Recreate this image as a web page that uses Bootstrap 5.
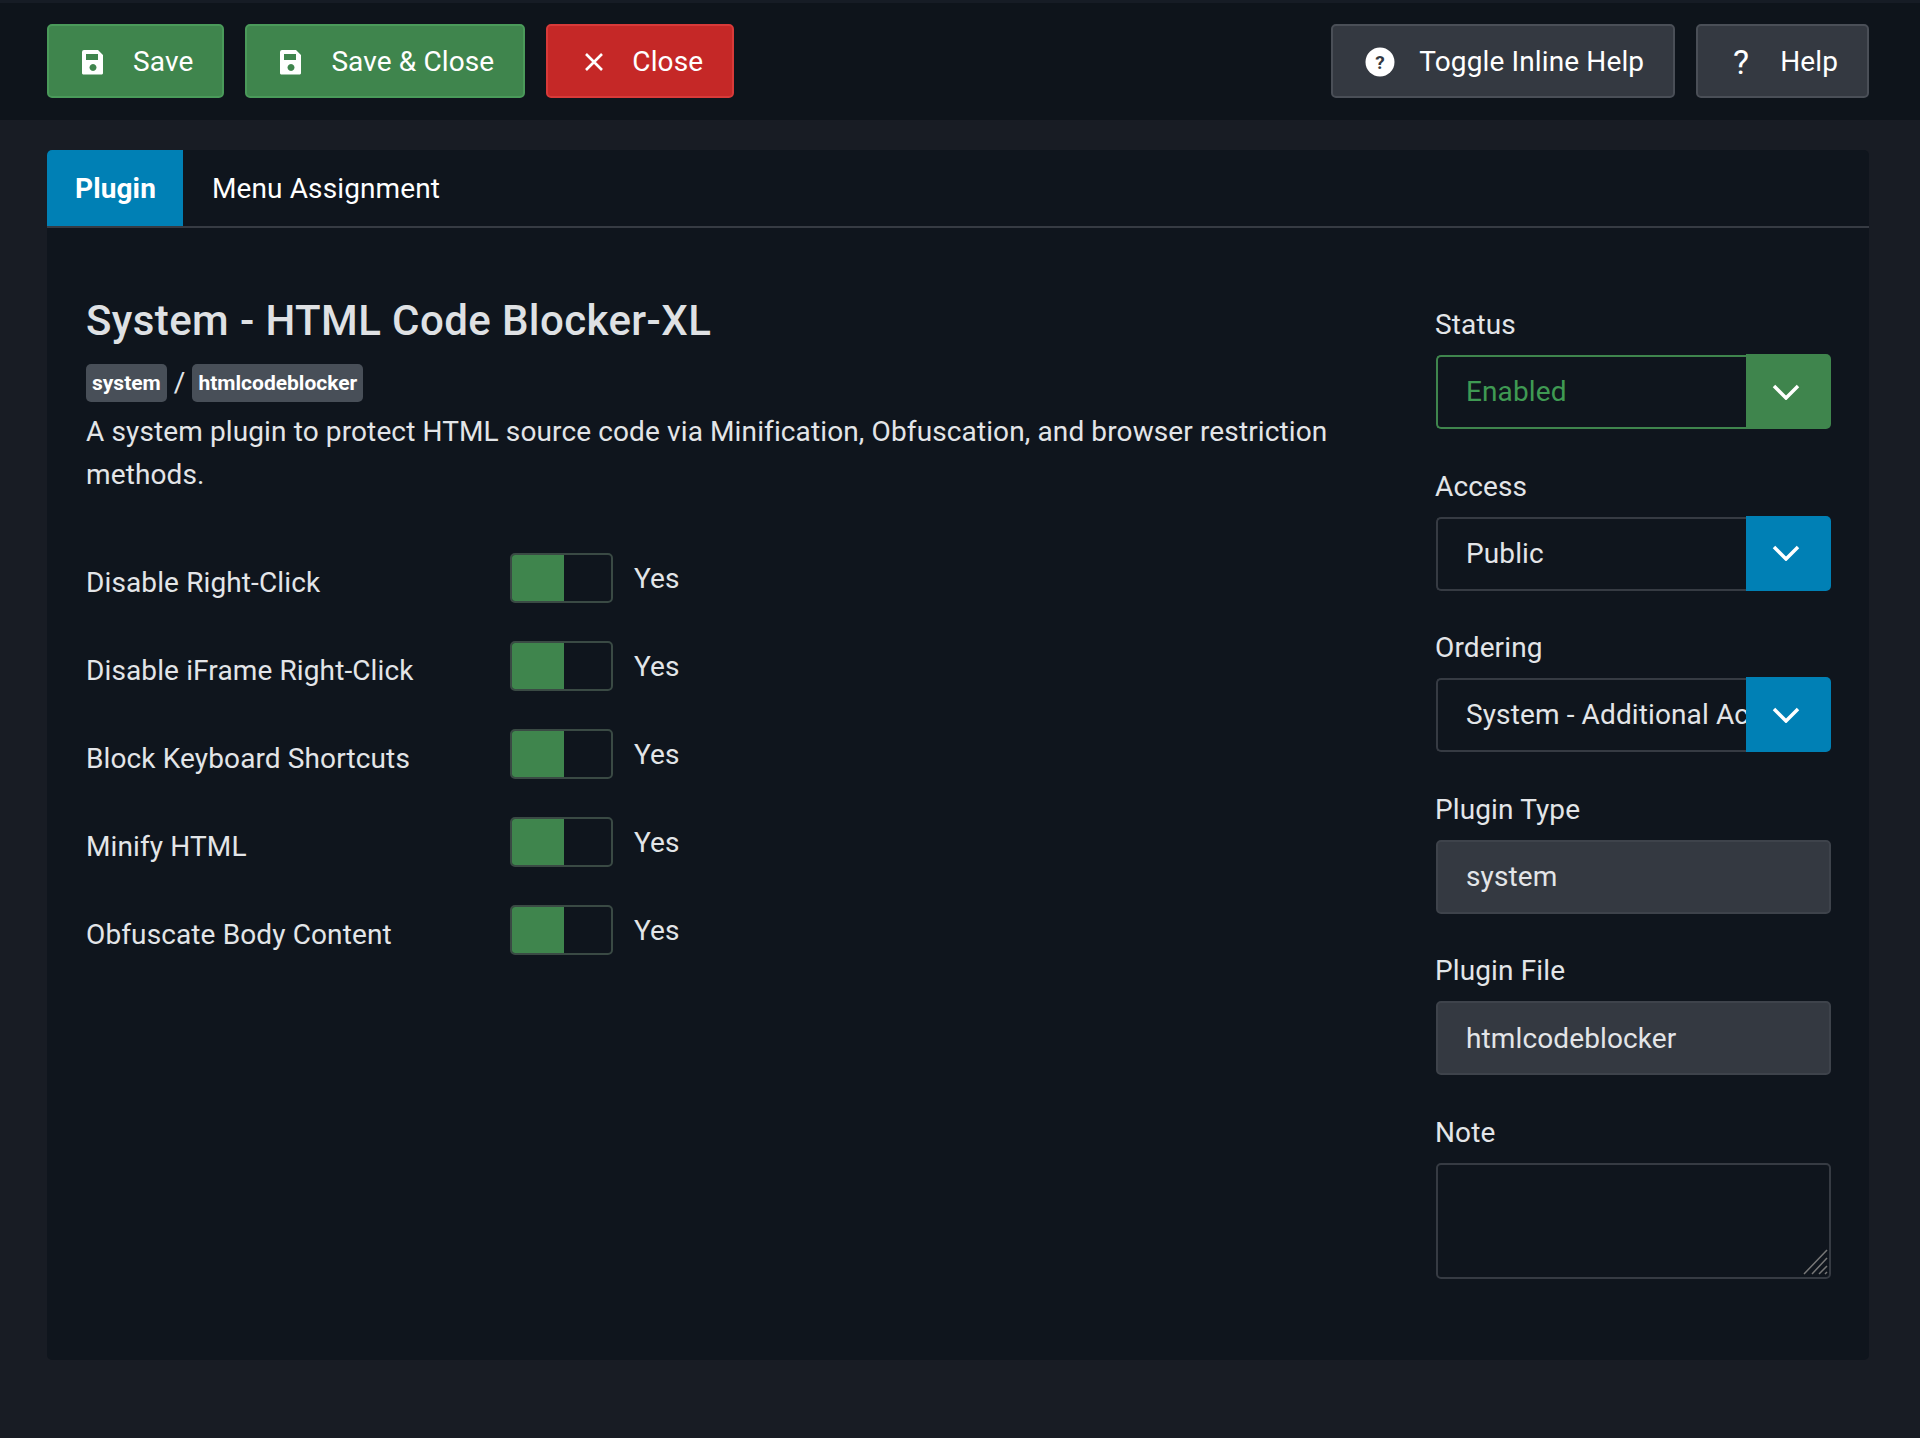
<!DOCTYPE html>
<html lang="en">
<head>
    <meta charset="UTF-8">
    <meta name="viewport" content="width=device-width, initial-scale=1.0">
    <title>Plugins: System - HTML Code Blocker-XL</title>
    <link href="https://cdn.jsdelivr.net/npm/bootstrap@5.3.1/dist/css/bootstrap.min.css" rel="stylesheet">
    <style>
        body { background: #181c24; color: #e3e5e8; font-family: Roboto, "Liberation Sans", sans-serif; font-size: 28px; letter-spacing: .12px; min-height: 1438px; }
        .top-bar { background: #0e141b; border-top: 3px solid #161c25; height: 120px; padding: 21px 51px 0 47px; }
        .act-btn { height: 74px; font-size: 28px; color: #fff; border-radius: 5px; padding: 2px 29px 0 32px; gap: 28px; display: inline-flex; align-items: center; border: 2px solid; }
        .act-btn:hover { color: #fff; }
        .act-green { background: #3f854d; border-color: #4a9a5a; }
        .act-red { background: #c52827; border-color: #d83a39; padding-left: 36px; }
        .act-gray { background: #343941; border-color: #4a4f57; }
        .act-tight { gap: 24px; }
        .sheet { margin: 30px 51px 0 47px; background: #0f151d; border-radius: 5px; height: 1210px; }
        .tab-row { height: 78px; border-bottom: 2px solid #363b43; }
        .tab-item { padding: 2px 29px 0; font-size: 28px; color: #fff; height: 76px; display: flex; align-items: center; text-decoration: none; }
        .tab-on { background: #0080b5; font-weight: 700; border-top-left-radius: 5px; padding: 2px 27px 0 28px; }
        .sheet-body { padding: 0 38px 0 39px; }
        .main-col { width: 1300px; padding-top: 69px; }
        .side-col { width: 395px; padding-top: 81px; }
        .plug-title { font-size: 42px; letter-spacing: .4px; font-weight: 500; line-height: 48px; margin: 0 0 19px; color: #dfe1e4; }
        .tag-chip { background: #484f58; color: #fff; font-size: 21px; letter-spacing: 0; font-weight: 700; padding: 1px 6px 0; border-radius: 5px; height: 38px; display: inline-flex; align-items: center; }
        .tag-sep { margin: 0 7px; line-height: 38px; }
        .plug-desc { line-height: 43px; margin: 8px 0 0; }
        .opt-row { height: 88px; display: flex; }
        .opt-label { width: 424px; padding-top: 8px; line-height: 43px; }
        .switch-box { width: 103px; height: 50px; border: 2px solid #3a4a44; border-radius: 5px; overflow: hidden; display: flex; }
        .switch-box span { width: 52px; background: #3f854d; }
        .opt-value { margin-left: 21px; padding-top: 4px; line-height: 43px; }
        .opts { margin-top: 57px; }
        .side-label { line-height: 32px; margin: 0 0 14px -1px; display: block; height: 32px; }
        .side-field { margin-bottom: 41.6px; }
        .sel-wrap { height: 74px; flex-wrap: nowrap; }
        .sel-wrap select { background: #0f151d none; color: #e3e5e8; border: 2px solid #363b43; border-right: 0; font-size: 28px; letter-spacing: .12px; border-radius: 5px 0 0 5px; padding: 0 0 0 28px; height: 74px; box-shadow: none; }
        .sel-arrow { width: 85px; border: 0; border-radius: 0 5px 5px 0 !important; justify-content: center; margin: -1px 0 0 0 !important; padding: 0 6px 0 0; }
        .arrow-green { background: #3f854d; }
        .arrow-blue { background: #0080b5; }
        .sel-green select { color: #3f9a53; border-color: #3f854d; }
        .ro-input, .ro-input:disabled { background: #343941; color: #e3e5e8; border: 2px solid #3e434b; border-radius: 5px; height: 74px; font-size: 28px; letter-spacing: .12px; padding: 0 28px; opacity: 1; }
        .note-area, .note-area:focus { background: #0f151d; border: 2px solid #363b43; border-radius: 5px; height: 116px; box-shadow: none; color: #e3e5e8; resize: none; }
        .note-grip { right: 3px; bottom: 4px; }
    </style>
</head>
<body>
<div class="top-bar d-flex justify-content-between">
    <div class="d-flex" style="gap:21px">
        <a class="act-btn act-green text-decoration-none" href="#">
            <svg width="24" height="28" viewBox="0 0 24 28"><path fill="#fff" fill-rule="evenodd" d="M3 2h14l5 5v18a1.500 1.500 0 0 1-2 1.500H3a1.500 1.500 0 0 1-2-1.500V4a2 2 0 0 1 2-2zM5 6v6h12V6zM12 16a3.500 3.500 0 1 0 .01 0z"/></svg>
            Save</a>
        <a class="act-btn act-green text-decoration-none" href="#">
            <svg width="24" height="28" viewBox="0 0 24 28"><path fill="#fff" fill-rule="evenodd" d="M3 2h14l5 5v18a1.500 1.500 0 0 1-2 1.500H3a1.500 1.500 0 0 1-2-1.500V4a2 2 0 0 1 2-2zM5 6v6h12V6zM12 16a3.500 3.500 0 1 0 .01 0z"/></svg>
            Save &amp; Close</a>
        <a class="act-btn act-red text-decoration-none" href="#">
            <svg width="20" height="20" viewBox="0 0 20 20"><path stroke="#fff" stroke-width="2.600" d="M2 2l16 16M18 2L2 18"/></svg>
            Close</a>
    </div>
    <div class="d-flex" style="gap:21px">
        <a class="act-btn act-gray act-tight text-decoration-none" href="#">
            <svg width="30" height="30" viewBox="0 0 30 30"><circle cx="15" cy="15" r="14.500" fill="#fff"/><text x="15" y="22" text-anchor="middle" font-family="Roboto" font-weight="700" font-size="19" fill="#343941">?</text></svg>
            Toggle Inline Help</a>
        <a class="act-btn act-gray text-decoration-none" href="#">
            <span style="font-size:34px;width:22px;text-align:center">?</span>
            Help</a>
    </div>
</div>

<div class="sheet">
    <div class="tab-row d-flex">
        <a class="tab-item tab-on" href="#">Plugin</a>
        <a class="tab-item" href="#">Menu Assignment</a>
    </div>
    <div class="sheet-body d-flex justify-content-between">
        <div class="main-col">
            <h1 class="plug-title">System - HTML Code Blocker-XL</h1>
            <div class="d-flex align-items-center">
                <span class="tag-chip">system</span><span class="tag-sep">/</span><span class="tag-chip">htmlcodeblocker</span>
            </div>
            <p class="plug-desc">A system plugin to protect HTML source code via Minification, Obfuscation, and browser restriction methods.</p>
            <div class="opts">
                <div class="opt-row"><div class="opt-label">Disable Right-Click</div><div class="switch-box"><span></span></div><div class="opt-value">Yes</div></div>
                <div class="opt-row"><div class="opt-label">Disable iFrame Right-Click</div><div class="switch-box"><span></span></div><div class="opt-value">Yes</div></div>
                <div class="opt-row"><div class="opt-label">Block Keyboard Shortcuts</div><div class="switch-box"><span></span></div><div class="opt-value">Yes</div></div>
                <div class="opt-row"><div class="opt-label">Minify HTML</div><div class="switch-box"><span></span></div><div class="opt-value">Yes</div></div>
                <div class="opt-row"><div class="opt-label">Obfuscate Body Content</div><div class="switch-box"><span></span></div><div class="opt-value">Yes</div></div>
            </div>
        </div>
        <div class="side-col">
            <div class="side-field">
                <label class="side-label">Status</label>
                <div class="input-group sel-wrap sel-green">
                    <select class="form-select"><option>Enabled</option></select>
                    <span class="input-group-text sel-arrow arrow-green"><svg width="28" height="16" viewBox="0 0 28 16"><path fill="none" stroke="#fff" stroke-width="3.500" d="M2 2l12 12L26 2"/></svg></span>
                </div>
            </div>
            <div class="side-field">
                <label class="side-label">Access</label>
                <div class="input-group sel-wrap">
                    <select class="form-select"><option>Public</option></select>
                    <span class="input-group-text sel-arrow arrow-blue"><svg width="28" height="16" viewBox="0 0 28 16"><path fill="none" stroke="#fff" stroke-width="3.500" d="M2 2l12 12L26 2"/></svg></span>
                </div>
            </div>
            <div class="side-field">
                <label class="side-label">Ordering</label>
                <div class="input-group sel-wrap">
                    <select class="form-select"><option>System - Additional Access Check</option></select>
                    <span class="input-group-text sel-arrow arrow-blue"><svg width="28" height="16" viewBox="0 0 28 16"><path fill="none" stroke="#fff" stroke-width="3.500" d="M2 2l12 12L26 2"/></svg></span>
                </div>
            </div>
            <div class="side-field">
                <label class="side-label">Plugin Type</label>
                <input class="form-control ro-input" value="system" disabled>
            </div>
            <div class="side-field">
                <label class="side-label">Plugin File</label>
                <input class="form-control ro-input" value="htmlcodeblocker" disabled>
            </div>
            <div class="side-field">
                <label class="side-label">Note</label>
                <div class="position-relative">
                    <textarea class="form-control note-area"></textarea>
                    <svg class="note-grip position-absolute" width="25" height="26" viewBox="0 0 25 26"><path fill="none" stroke="#777" stroke-width="1.500" d="M1 25L24 1M9 25L24 9M16 25l8-8M22 25l2-2"/></svg>
                </div>
            </div>
        </div>
    </div>
</div>
<script src="https://cdn.jsdelivr.net/npm/bootstrap@5.3.1/dist/js/bootstrap.bundle.min.js"></script>
</body>
</html>
